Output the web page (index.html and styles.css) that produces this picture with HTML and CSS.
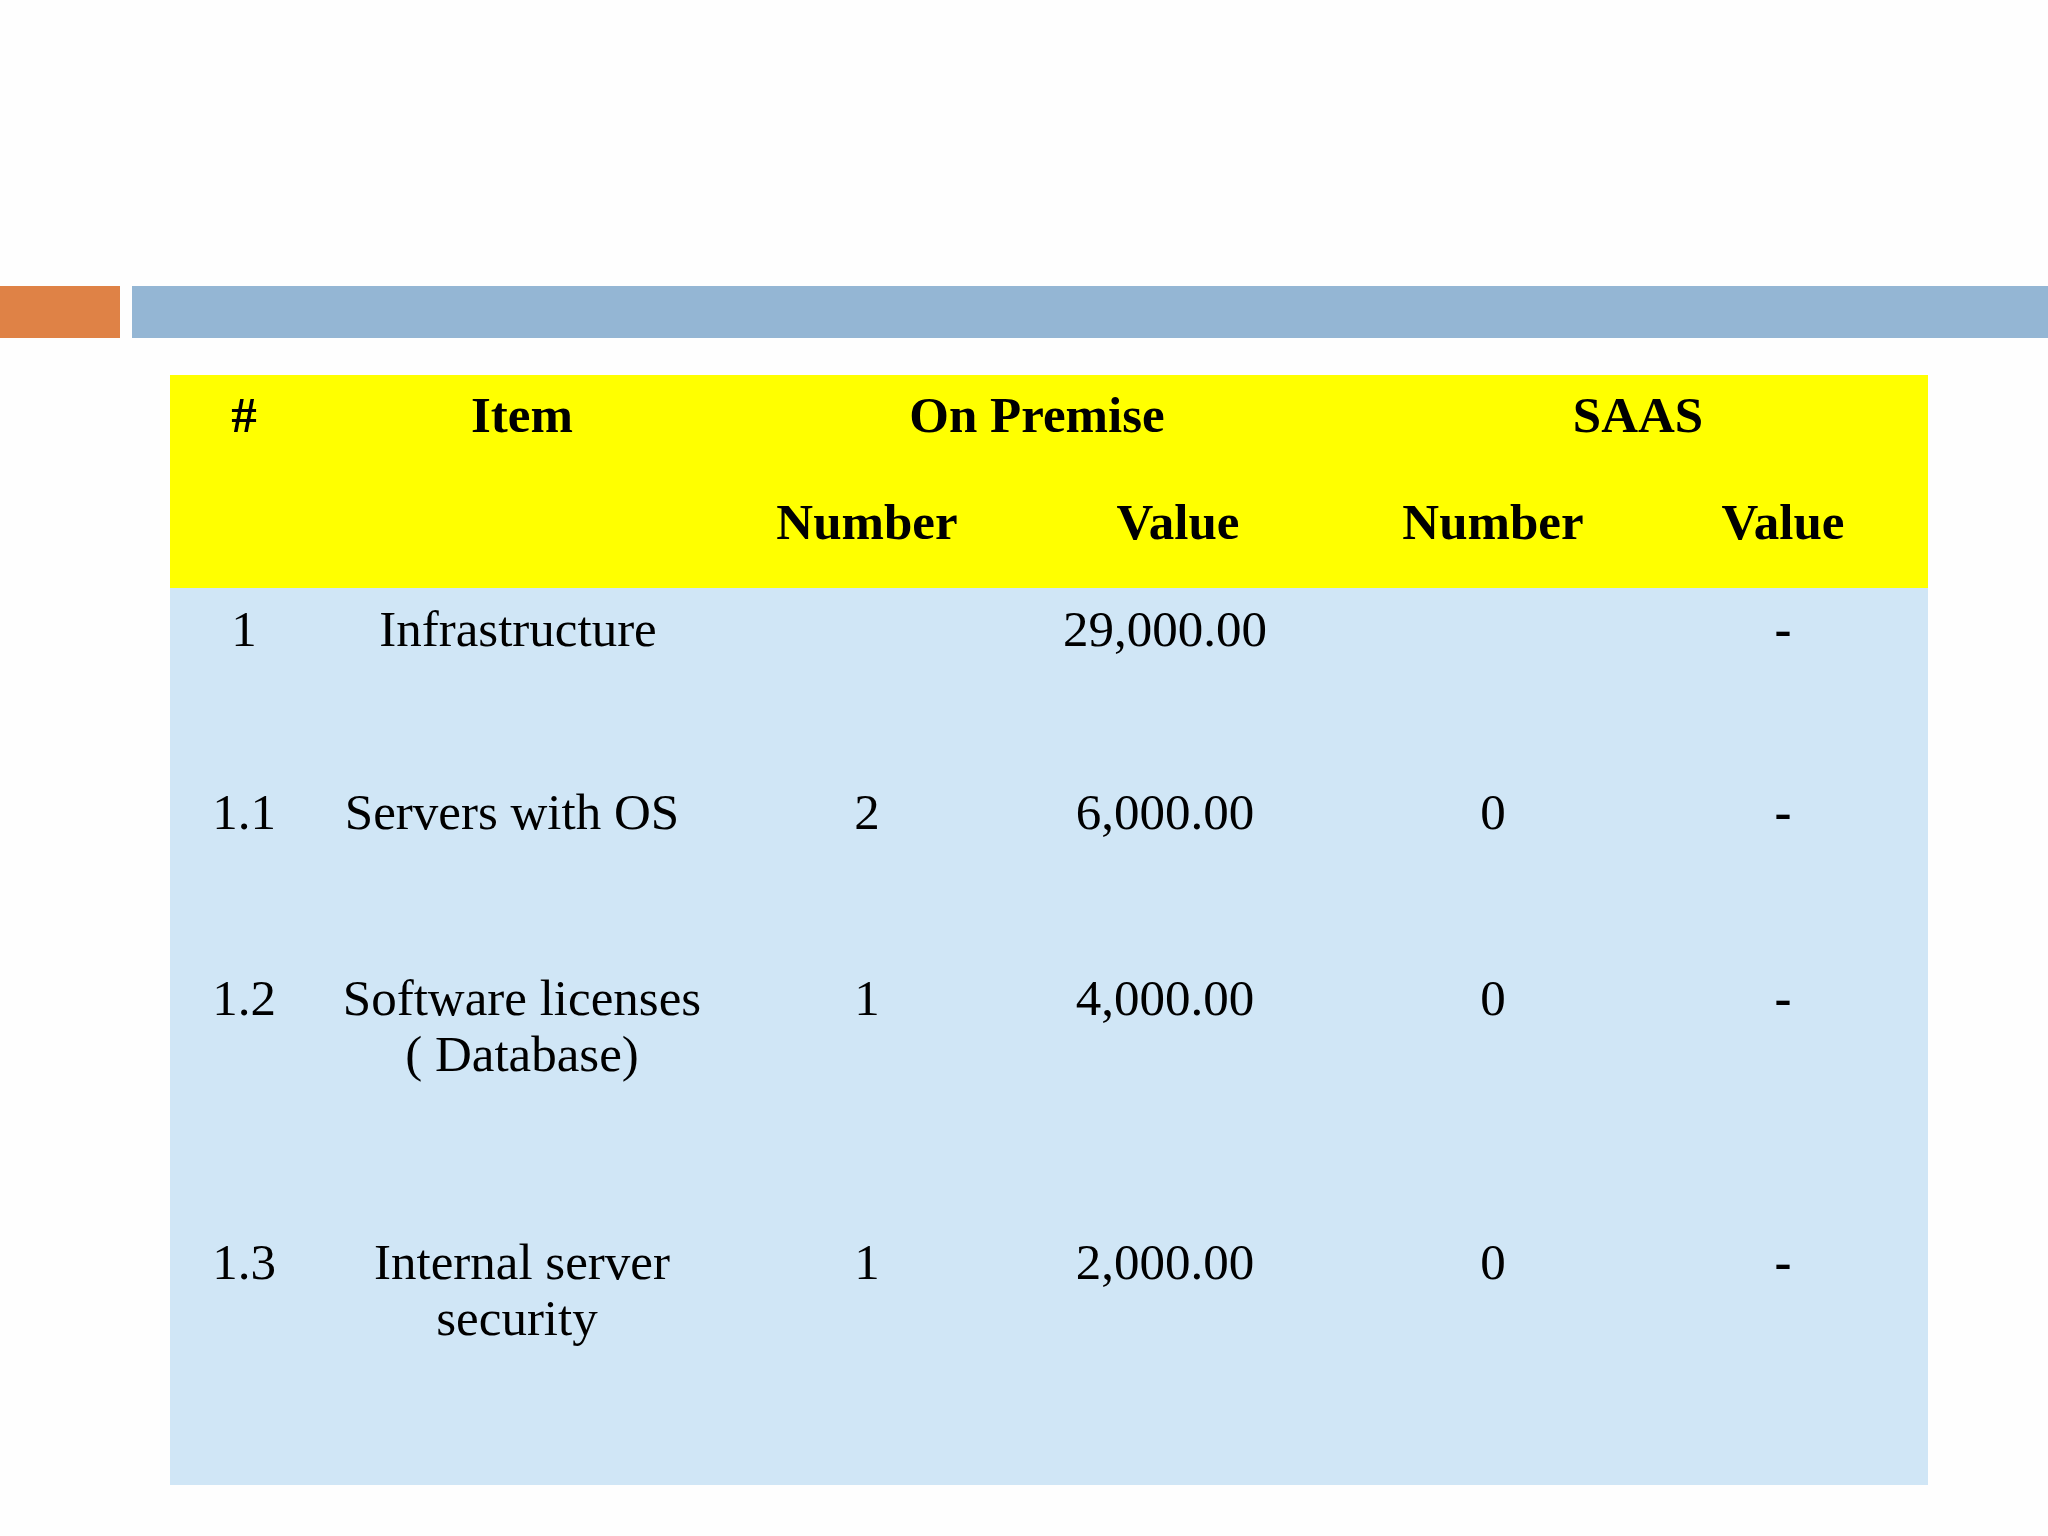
FILE: index.html
```html
<!DOCTYPE html>
<html lang="en">
<head>
<meta charset="utf-8">
<title>On Premise vs SAAS</title>
<link rel="stylesheet" href="styles.css">
</head>
<body>
<div class="bars">
  <div class="bar-orange"></div>
  <div class="bar-blue"></div>
</div>
<table class="cost">
  <colgroup>
    <col class="c1"><col class="c2"><col class="c3"><col class="c4"><col class="c5"><col class="c6">
  </colgroup>
  <thead>
    <tr class="h1">
      <th>#</th>
      <th>Item</th>
      <th colspan="2">On Premise</th>
      <th colspan="2">SAAS</th>
    </tr>
    <tr class="h2">
      <th></th>
      <th></th>
      <th>Number</th>
      <th>Value</th>
      <th>Number</th>
      <th>Value</th>
    </tr>
  </thead>
  <tbody>
    <tr class="r-a">
      <td>1</td>
      <td class="shift-s">Infrastructure</td>
      <td></td>
      <td class="val">29,000.00</td>
      <td></td>
      <td class="dash">-</td>
    </tr>
    <tr class="r-b">
      <td>1.1</td>
      <td class="shift-l">Servers with OS</td>
      <td>2</td>
      <td class="val">6,000.00</td>
      <td>0</td>
      <td class="dash">-</td>
    </tr>
    <tr class="r-c">
      <td>1.2</td>
      <td>Software licenses<br>( Database)</td>
      <td>1</td>
      <td class="val">4,000.00</td>
      <td>0</td>
      <td class="dash">-</td>
    </tr>
    <tr class="r-d">
      <td>1.3</td>
      <td>Internal server<br><span class="shift-line">security</span></td>
      <td>1</td>
      <td class="val">2,000.00</td>
      <td>0</td>
      <td class="dash">-</td>
    </tr>
  </tbody>
</table>
</body>
</html>
```
FILE: styles.css
```css
html, body {
  margin: 0;
  padding: 0;
  background: #fefefe;
}

body {
  width: 2048px;
  height: 1536px;
  overflow: hidden;
  font-family: "Liberation Serif", "Times New Roman", serif;
  color: #000;
}

.bars {
  display: flex;
  gap: 12px;
  margin-top: 286px;
  height: 52px;
}

.bar-orange {
  width: 120px;
  background: #df8246;
}

.bar-blue {
  flex: 1;
  background: #94b6d4;
}

.cost {
  margin: 37px 0 0 170px;
  width: 1758px;
  border-collapse: collapse;
  border-spacing: 0;
  table-layout: fixed;
  font-size: 51px;
  line-height: 56px;
}

.c1 { width: 148px; }
.c2 { width: 408px; }
.c3 { width: 282px; }
.c4 { width: 340px; }
.c5 { width: 290px; }
.c6 { width: 290px; }

.cost th,
.cost td {
  padding: 12px 0 0;
  text-align: center;
  vertical-align: top;
}

.cost thead {
  background: #ffff00;
}

.cost th {
  font-weight: bold;
}

.h1 { height: 107px; }
.h2 { height: 106px; }

.cost tbody {
  background: #d0e6f6;
}

.cost td {
  font-weight: normal;
  padding-top: 13px;
}

.r-a { height: 183px; }
.r-b { height: 186px; }
.r-c { height: 264px; }
.r-d { height: 264px; }

.cost td.val {
  padding-right: 26px;
}

.cost td.shift-s {
  padding-right: 8px;
}

.cost td.shift-l {
  padding-right: 20px;
}

.shift-line {
  padding-right: 10px;
}

.cost td.dash {
  font-weight: bold;
}
```
